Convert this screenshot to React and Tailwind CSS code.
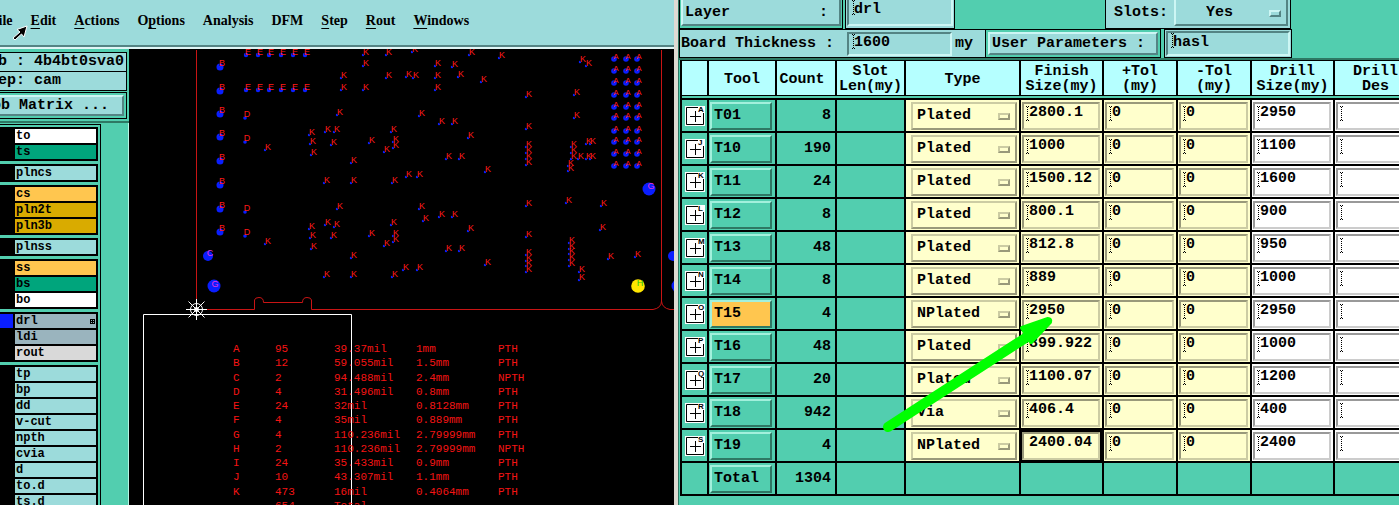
import React, { useState } from "react";

const MENU = [
  ["", "F", "ile"],
  ["", "E", "dit"],
  ["", "A", "ctions"],
  ["O", "p", "tions"],
  ["Analysis", "", ""],
  ["DFM", "", ""],
  ["", "S", "tep"],
  ["", "R", "out"],
  ["", "W", "indows"],
];

const LAYER_GROUPS = [
  [
    ["to", "bg-white"],
    ["ts", "bg-[#00a57c]"],
  ],
  [["plncs", "bg-[#9cdbdb]"]],
  [
    ["cs", "bg-[#ffc64f]"],
    ["pln2t", "bg-[#d9ab00]"],
    ["pln3b", "bg-[#d9ab00]"],
  ],
  [["plnss", "bg-[#9cdbdb]"]],
  [
    ["ss", "bg-[#ffc64f]"],
    ["bs", "bg-[#00a57c]"],
    ["bo", "bg-white"],
  ],
  [
    ["drl", "bg-[#9ab4be]"],
    ["ldi", "bg-[#9ab4be]"],
    ["rout", "bg-[#d9d9d9]"],
  ],
  [
    ["tp", "bg-[#9cdbdb]"],
    ["bp", "bg-[#9cdbdb]"],
    ["dd", "bg-[#9cdbdb]"],
    ["v-cut", "bg-[#9cdbdb]"],
    ["npth", "bg-[#9cdbdb]"],
    ["cvia", "bg-[#9cdbdb]"],
    ["d", "bg-[#9cdbdb]"],
    ["to.d", "bg-[#9cdbdb]"],
    ["ts.d", "bg-[#9cdbdb]"],
  ],
];

const DRILL_LEGEND = [
  ["A", "95", "39.37mil", "1mm", "PTH"],
  ["B", "12", "59.055mil", "1.5mm", "PTH"],
  ["C", "2", "94.488mil", "2.4mm", "NPTH"],
  ["D", "4", "31.496mil", "0.8mm", "PTH"],
  ["E", "24", "32mil", "0.8128mm", "PTH"],
  ["F", "4", "35mil", "0.889mm", "PTH"],
  ["G", "4", "110.236mil", "2.79999mm", "PTH"],
  ["H", "2", "110.236mil", "2.79999mm", "NPTH"],
  ["I", "24", "35.433mil", "0.9mm", "PTH"],
  ["J", "10", "43.307mil", "1.1mm", "PTH"],
  ["K", "473", "16mil", "0.4064mm", "PTH"],
  ["", "654", "Total", "", ""],
];

// Hole positions on the board, letter centres
const K_HOLES = [
  [366, 52], [389, 52], [415, 49], [366, 63], [344, 75], [389, 75], [409, 74],
  [416, 75], [344, 87], [366, 87], [340, 112], [422, 113], [312, 132],
  [328, 129], [337, 129], [313, 141], [334, 142], [314, 152], [268, 147],
  [372, 140], [394, 129], [396, 139], [396, 145], [387, 149], [354, 160],
  [327, 180], [354, 180], [395, 180], [409, 174], [420, 174], [340, 206],
  [422, 206], [426, 218], [328, 222], [337, 224], [394, 222], [312, 226],
  [313, 235], [334, 235], [314, 246], [268, 241], [372, 233], [396, 233],
  [396, 239], [387, 243], [354, 255], [406, 267], [420, 267], [327, 274],
  [354, 274], [395, 274], [438, 63], [455, 64], [472, 52], [502, 55],
  [438, 75], [461, 74], [438, 87], [484, 79], [442, 121], [455, 121],
  [471, 135], [449, 156], [462, 156], [488, 169], [529, 94], [529, 126],
  [529, 144], [529, 150], [529, 156], [529, 162], [583, 59], [589, 63],
  [577, 92], [577, 115], [574, 144], [574, 150], [574, 156], [581, 156],
  [589, 141], [593, 141], [589, 156], [593, 156], [571, 163], [571, 168],
  [529, 203], [569, 200], [604, 203], [442, 214], [455, 214], [471, 228],
  [603, 227], [529, 234], [449, 248], [462, 248], [488, 262], [529, 252],
  [529, 258], [529, 263], [529, 269], [572, 240], [572, 246], [572, 251],
  [572, 257], [572, 263], [611, 256], [638, 254], [582, 269], [582, 277],
];
const A_COLS = [616, 628, 639];
const A_ROWS = [56, 68, 80, 92, 104, 115, 128, 139, 151, 163];
const B_ROWS = [63, 87, 110, 133, 157, 181, 205, 228];
const D_ROWS = [114, 138, 208, 232];
const E_COLS = [248, 260, 271, 283, 295, 307];

const TOOLS = [
  ["T01", "8", "A", "Plated", "2800.1", "2950"],
  ["T10", "190", "J", "Plated", "1000", "1100"],
  ["T11", "24", "K", "Plated", "1500.12", "1600"],
  ["T12", "8", "L", "Plated", "800.1", "900"],
  ["T13", "48", "M", "Plated", "812.8", "950"],
  ["T14", "8", "N", "Plated", "889", "1000"],
  ["T15", "4", "O", "NPlated", "2950", "2950"],
  ["T16", "48", "P", "Plated", "899.922", "1000"],
  ["T17", "20", "Q", "Plated", "1100.07", "1200"],
  ["T18", "942", "R", "Via", "406.4", "400"],
  ["T19", "4", "S", "NPlated", "2400.04", "2400"],
];

const RAISED_BLUE =
  "border-2 border-t-[#cdf6f4] border-l-[#cdf6f4] border-b-[#548484] border-r-[#548484] bg-[#9cdbdb]";
const SUNKEN_BLUE =
  "border-2 border-b-[#cdf6f4] border-r-[#cdf6f4] border-t-[#548484] border-l-[#548484] bg-[#9cdbdb]";
const RAISED_GREEN =
  "border-2 border-t-[#a2f0dc] border-l-[#a2f0dc] border-b-[#2e7864] border-r-[#2e7864]";

function MenuBar() {
  return (
    <header className="relative h-[49px] shrink-0 border-b-2 border-[#e0f6f6] bg-[#9cdbdb]">
      <nav className="-ml-[10px] flex h-[47px] items-center gap-[18px] border-b-2 border-[#548484] pb-1 font-['Liberation_Serif',serif] text-[14px] font-bold text-black">
        {MENU.map(([before, key, after]) => (
          <button key={before + key + after} type="button">
            {before}
            <span className="underline underline-offset-3">{key}</span>
            {after}
          </button>
        ))}
      </nav>
      <svg
        className="absolute top-[25px] left-[12px]"
        width="17"
        height="16"
        viewBox="0 0 17 16"
        aria-hidden="true"
      >
        <path
          d="M15 1 L12 12 L9.5 9 L3 15 L1 13 L8 7 L5 4.500 Z"
          fill="#000"
          stroke="#fff"
          strokeWidth="1"
        />
      </svg>
    </header>
  );
}

function LayerList() {
  return (
    <aside className="flex w-[129px] shrink-0 flex-col overflow-hidden bg-[#52ceaf] font-['Liberation_Mono',monospace] font-bold whitespace-pre text-black">
      <div className="mt-[3px] mr-[2px] border border-l-0 border-black bg-[#9cdbdb] text-[15px] leading-[18px]">
        <div className="border-b border-black">
          <p className="-ml-5">Job : 4b4bt0sva0</p>
        </div>
        <p className="-ml-5">Step: cam</p>
      </div>
      <div className="mt-[1px] mr-[2px] border border-l-0 border-black py-[2px] pr-[2px] text-[15px]">
        <button
          type="button"
          className={`block w-full text-left leading-[17px] ${RAISED_BLUE} border-l-0`}
        >
          <span className="-ml-[17px] block">Job Matrix ...</span>
        </button>
      </div>
      <div className="mt-[2px] h-[2px] shrink-0 bg-[#2e7864]" />
      <div className="min-h-0 flex-1 border-r border-[#b5f5e5]">
        <div className="mt-[1px] h-full w-[101px] border-t border-r border-black pt-[2px]">
          <ul className="flex w-[98px] flex-col gap-[3px] text-[12px] leading-[14px]">
            {LAYER_GROUPS.map((group) => (
              <li key={group[0][0]} className="bg-black pt-[2px]">
                {group.map(([name, color]) => (
                  <div key={name} className="flex pb-[2px]">
                    <span
                      className={`mr-[2px] h-[14px] w-[13px] ${
                        name === "drl" ? "bg-[#0a1eff]" : ""
                      }`}
                    />
                    <button
                      type="button"
                      className={`flex h-[14px] w-[81px] items-center justify-between px-[1px] ${color}`}
                    >
                      {name}
                      {name === "drl" && (
                        <svg width="5" height="5" aria-hidden="true">
                          <path
                            d="M0 0.500H5M0 2.500H5M0 4.500H5M0.500 0V5M2.500 0V5M4.500 0V5"
                            stroke="#000"
                            strokeWidth="1"
                          />
                        </svg>
                      )}
                    </button>
                  </div>
                ))}
              </li>
            ))}
          </ul>
        </div>
      </div>
    </aside>
  );
}

function Hole({ x, y, letter, dx = 2, dy = 3, r = 2, size = 9 }) {
  return (
    <g>
      <circle cx={x - dx} cy={y + dy} r={r} fill="#0a1eff" />
      <text x={x} y={y + 3} fontSize={size} textAnchor="middle" fill="#ff1919">
        {letter}
      </text>
    </g>
  );
}

function BoardView() {
  return (
    <main className="relative min-w-0 flex-1 overflow-hidden bg-black">
      <svg
        className="absolute top-0 left-0 font-['Liberation_Sans',sans-serif]"
        width="545"
        height="456"
        viewBox="129 49 545 456"
      >
        <g fill="none" stroke="#c81414" strokeWidth="1">
          <path d="M196.500 50V309.500H254.500V300Q255 297.500 259 297.500Q263.500 297.500 263.500 302.500H302.500Q302.500 297.500 307 297.500Q311 297.500 311.500 300V309.500H653Q661.500 308 661.500 301V50" />
          <path d="M661.500 301Q662 308 670 309.500H674" />
        </g>
        <path d="M143.500 505V314.500H351.500V505" fill="none" stroke="#fff" />

        {K_HOLES.map(([x, y]) => (
          <Hole key={`${x}-${y}`} x={x} y={y} letter="K" dx={3} r={1.2} />
        ))}
        {B_ROWS.map((y) => (
          <Hole key={y} x={222} y={y} letter="B" dy={4} r={3.5} />
        ))}
        {D_ROWS.map((y) => (
          <Hole key={y} x={247} y={y} letter="D" dy={4} r={1.8} />
        ))}
        {[52, 87].map((y) =>
          E_COLS.map((x) => (
            <Hole key={`${x}-${y}`} x={x} y={y} letter="E" r={2.2} />
          ))
        )}
        {A_ROWS.map((y) =>
          A_COLS.map((x) => (
            <Hole key={`${x}-${y}`} x={x} y={y} letter="A" r={2.8} size={8} />
          ))
        )}

        <g fill="#0a1eff">
          <circle cx="208" cy="256" r="5" />
          <circle cx="214" cy="286" r="6.500" />
          <circle cx="649" cy="189" r="6.500" />
          <circle cx="673" cy="256" r="5" />
          <circle cx="678" cy="286" r="6.500" />
        </g>
        <circle cx="638" cy="286" r="6.800" fill="#ffe600" />
        <g fontSize="9" textAnchor="middle" fill="#e632dc">
          <text x="210" y="256">C</text>
          <text x="215" y="287">G</text>
          <text x="651" y="189">G</text>
        </g>
        <text x="640" y="286" fontSize="9" textAnchor="middle" fill="#28c814">
          H
        </text>

        <g stroke="#fff" fill="none">
          <circle cx="196.500" cy="309.500" r="6" />
          <circle cx="196.500" cy="309.500" r="2" fill="#fff" />
          <path d="M196.500 299V320M186 309.500H207M188.500 301.500L204.500 317.500M204.500 301.500L188.500 317.500" />
        </g>
      </svg>

      <table className="absolute top-[293px] left-[104px] h-[171px] w-[310px] table-fixed font-['Liberation_Mono',monospace] text-[11px] leading-[12px] text-[#f51414]">
        <colgroup>
          <col className="w-[42px]" />
          <col className="w-[59px]" />
          <col className="w-[82px]" />
          <col className="w-[82px]" />
          <col className="w-[45px]" />
        </colgroup>
        <tbody>
          {DRILL_LEGEND.map((row) => (
            <tr key={row[0]}>
              {row.map((cell, i) => (
                <td key={i} className="p-0">
                  {cell}
                </td>
              ))}
            </tr>
          ))}
        </tbody>
      </table>
    </main>
  );
}

function IBeam() {
  return (
    <svg
      className="pointer-events-none absolute top-[4px] left-[5px]"
      width="3"
      height="15"
      viewBox="0 0 3 15"
      aria-hidden="true"
    >
      <path d="M1.500 1V14" stroke="#000" strokeDasharray="1 1" />
      <path d="M0 0.500H1M2 0.500H3M0 14.500H1M2 14.500H3" stroke="#000" />
    </svg>
  );
}

function CellInput({ label, value, tone, active }) {
  const tones = {
    yellow:
      "bg-[#ffffcc] border-t-[#99997a] border-l-[#99997a] border-b-[#cccca3] border-r-[#cccca3]",
    white:
      "bg-white border-t-[#999999] border-l-[#999999] border-b-[#cccccc] border-r-[#cccccc]",
  };
  return (
    <td
      className={`border-r-2 border-b-2 border-black p-0 ${
        tone === "yellow" ? "bg-[#ffffcc]" : "bg-white"
      }`}
    >
      <div className="relative pr-[2px] pl-[1px]">
        <input
          aria-label={label}
          defaultValue={value}
          className={`block h-[28px] w-full border-2 pb-[6px] pl-[5px] outline-none ${
            tones[tone]
          } ${active ? "ring-3 ring-black" : ""}`}
        />
        {!active && <IBeam />}
      </div>
    </td>
  );
}

function DrillSymbol({ letter }) {
  return (
    <svg
      className="mx-auto block bg-white font-['Liberation_Sans',sans-serif]"
      width="20"
      height="20"
      viewBox="0 0 20 20"
    >
      <path
        d="M13 1.500H1.500V18.500H18.500V7M5 10.500H16M10.500 5V16"
        fill="none"
        stroke="#000"
      />
      <text x="13" y="6" fontSize="8" fill="#000">
        {letter}
      </text>
    </svg>
  );
}

function ToolTable() {
  const [tools, setTools] = useState(TOOLS);

  const handleTypeChange = (id, type) => {
    setTools((prev) =>
      prev.map((tool) =>
        tool[0] === id ? [...tool.slice(0, 3), type, ...tool.slice(4)] : tool
      )
    );
  };

  const th =
    "h-[36px] border-y border-r-2 border-black bg-[#b5ffff] p-0 pt-[2px] leading-[15px]";
  const td = "h-[33px] border-r-2 border-b-2 border-black p-0";

  return (
    <table className="ml-[1px] w-[738px] table-fixed border-separate border-spacing-0 border-l-2 border-black">
      <colgroup>
        <col className="w-[27px]" />
        <col className="w-[68px]" />
        <col className="w-[60px]" />
        <col className="w-[69px]" />
        <col className="w-[115px]" />
        <col className="w-[83px]" />
        <col className="w-[74px]" />
        <col className="w-[74px]" />
        <col className="w-[83px]" />
        <col className="w-[83px]" />
      </colgroup>
      <thead>
        <tr>
          <th className={th}></th>
          <th className={th}>Tool</th>
          <th className={`${th} pr-2`}>Count</th>
          <th className={th}>
            Slot
            <br />
            Len(my)
          </th>
          <th className={th}>Type</th>
          <th className={th}>
            Finish
            <br />
            Size(my)
          </th>
          <th className={th}>
            +Tol
            <br />
            (my)
          </th>
          <th className={th}>
            -Tol
            <br />
            (my)
          </th>
          <th className={th}>
            Drill
            <br />
            Size(my)
          </th>
          <th className={th}>
            Drill
            <br />
            Des
          </th>
        </tr>
      </thead>
      <tbody>
        <tr aria-hidden="true">
          <td colSpan={10} className="h-[4px] border-b-2 border-black p-0"></td>
        </tr>
        {tools.map(([id, count, letter, type, finish, drill]) => (
          <tr key={id}>
            <td className={td}>
              <DrillSymbol letter={letter} />
            </td>
            <td className={td}>
              <div className="pr-[3px] pl-[1px]">
                <button
                  type="button"
                  className={`block h-[28px] w-full pl-[2px] text-left ${RAISED_GREEN} ${
                    id === "T15" ? "bg-[#ffc64f]" : ""
                  }`}
                >
                  {id}
                </button>
              </div>
            </td>
            <td className={`${td} pr-[4px] text-right`}>{count}</td>
            <td className={td}></td>
            <td className={`${td} bg-[#ffffcc]`}>
              <div className="relative pr-[2px] pl-[5px]">
                <select
                  aria-label={`${id} type`}
                  value={type}
                  onChange={(e) => handleTypeChange(id, e.target.value)}
                  className="block h-[28px] w-full appearance-none border-2 border-t-[#cccca3] border-r-[#99997a] border-b-[#99997a] border-l-[#cccca3] bg-[#ffffcc] pl-[4px]"
                >
                  <option>Plated</option>
                  <option>NPlated</option>
                  <option>Via</option>
                </select>
                <span className="pointer-events-none absolute top-[11px] right-[9px] h-[7px] w-[12px] border-2 border-t-[#cccca3] border-r-[#99997a] border-b-[#99997a] border-l-[#cccca3]" />
              </div>
            </td>
            <CellInput
              label={`${id} finish size`}
              value={finish}
              tone="yellow"
              active={id === "T19"}
            />
            <CellInput label={`${id} plus tolerance`} value="0" tone="yellow" />
            <CellInput label={`${id} minus tolerance`} value="0" tone="yellow" />
            <CellInput label={`${id} drill size`} value={drill} tone="white" />
            <CellInput label={`${id} drill designator`} value="" tone="white" />
          </tr>
        ))}
        <tr>
          <td className={td}></td>
          <td className={td}>
            <div className="pr-[3px] pl-[1px]">
              <button
                type="button"
                className={`block h-[28px] w-full pl-[2px] text-left ${RAISED_GREEN}`}
              >
                Total
              </button>
            </div>
          </td>
          <td className={`${td} pr-[4px] text-right`}>1304</td>
          <td className={td}></td>
          <td className={td}></td>
          <td className={td}></td>
          <td className={td}></td>
          <td className={td}></td>
          <td className={td}></td>
          <td className={td}></td>
        </tr>
      </tbody>
    </table>
  );
}

function DrillToolsManager() {
  return (
    <section className="relative min-w-0 overflow-hidden border-l-4 border-[#dedad2] bg-[#52ceaf] font-['Liberation_Mono',monospace] text-[15px] leading-[18px] font-bold text-black">
      <div className="h-full border-l border-[#2e7864]">
        <div className="flex h-[29px]">
          <div className="w-[164px] shrink-0 border border-t-0 border-black pr-[1px] pb-[2px] pl-[1px]">
            <button
              type="button"
              className={`flex h-[26px] w-full items-center justify-between pt-[2px] pr-[11px] pl-[2px] ${RAISED_BLUE} border-t-0`}
            >
              <span>Layer</span>
              <span>:</span>
            </button>
          </div>
          <div className="ml-[2px] w-[110px] shrink-0 border border-t-0 border-black bg-[#9cdbdb] pr-[1px] pb-[2px] pl-[1px]">
            <div className="relative">
              <input
                aria-label="Layer"
                defaultValue="drl"
                className={`block h-[26px] w-full pb-[6px] pl-[5px] outline-none ${SUNKEN_BLUE} border-t-0`}
              />
              <span className="absolute top-[-4px] left-0">
                <IBeam />
              </span>
            </div>
          </div>
          <div className="ml-[150px] flex w-[186px] shrink-0 items-center justify-between border border-t-0 border-black bg-[#9cdbdb] pr-[2px] pb-[2px] pl-[8px]">
            <label htmlFor="slots">Slots:</label>
            <div className="relative w-[114px]">
              <select
                id="slots"
                defaultValue="Yes"
                className={`block h-[26px] w-full appearance-none pt-[2px] pl-[30px] ${RAISED_BLUE} border-t-0`}
              >
                <option>Yes</option>
                <option>No</option>
              </select>
              <span
                className={`pointer-events-none absolute top-[10px] right-[7px] h-[7px] w-[12px] ${RAISED_BLUE}`}
              />
            </div>
          </div>
        </div>

        <div className="flex h-[29px]">
          <div className="flex w-[307px] shrink-0 items-center border border-black bg-[#9cdbdb] pl-[1px]">
            <label htmlFor="thickness" className="w-[166px]">
              Board Thickness :
            </label>
            <div className="relative w-[105px]">
              <input
                id="thickness"
                defaultValue="1600"
                className={`block h-[24px] w-full pb-[2px] pl-[5px] outline-none ${SUNKEN_BLUE}`}
              />
              <span className="absolute top-[-2px] left-0">
                <IBeam />
              </span>
            </div>
            <span className="pl-[3px]">my</span>
          </div>
          <div className="w-[175px] shrink-0 border border-l-0 border-black p-[2px]">
            <button
              type="button"
              className={`block h-[23px] w-full pl-[2px] text-left leading-[18px] ${RAISED_BLUE}`}
            >
              User Parameters :
            </button>
          </div>
          <div className="ml-[3px] w-[128px] shrink-0 border border-black bg-[#9cdbdb] p-[1px]">
            <div className="relative">
              <input
                aria-label="User parameters"
                defaultValue="hasl"
                className={`block h-[25px] w-full pb-[2px] pl-[5px] outline-none ${SUNKEN_BLUE}`}
              />
              <span className="absolute top-[-2px] left-0">
                <IBeam />
              </span>
            </div>
          </div>
        </div>

        <div className="h-[2px] bg-[#2e7864]" />
        <ToolTable />
      </div>

      {/* green marker pointing at the T15 finish size */}
      <svg
        className="pointer-events-none absolute top-0 left-[-4px]"
        width="725"
        height="505"
        viewBox="674 0 725 505"
        aria-hidden="true"
      >
        <path
          d="M888 427L1027 337"
          stroke="#00ff00"
          strokeWidth="10"
          strokeLinecap="round"
        />
        <path
          d="M1022 328L1048 319Q1051 319 1050 322L1031 342Z"
          fill="#00ff00"
          stroke="#00ff00"
          strokeWidth="4"
          strokeLinejoin="round"
        />
      </svg>
    </section>
  );
}

export default function App() {
  return (
    <div className="grid h-screen grid-cols-[674fr_725fr] overflow-hidden bg-black">
      <div className="flex min-w-0 flex-col overflow-hidden">
        <MenuBar />
        <div className="flex min-h-0 flex-1">
          <LayerList />
          <BoardView />
        </div>
      </div>
      <DrillToolsManager />
    </div>
  );
}
